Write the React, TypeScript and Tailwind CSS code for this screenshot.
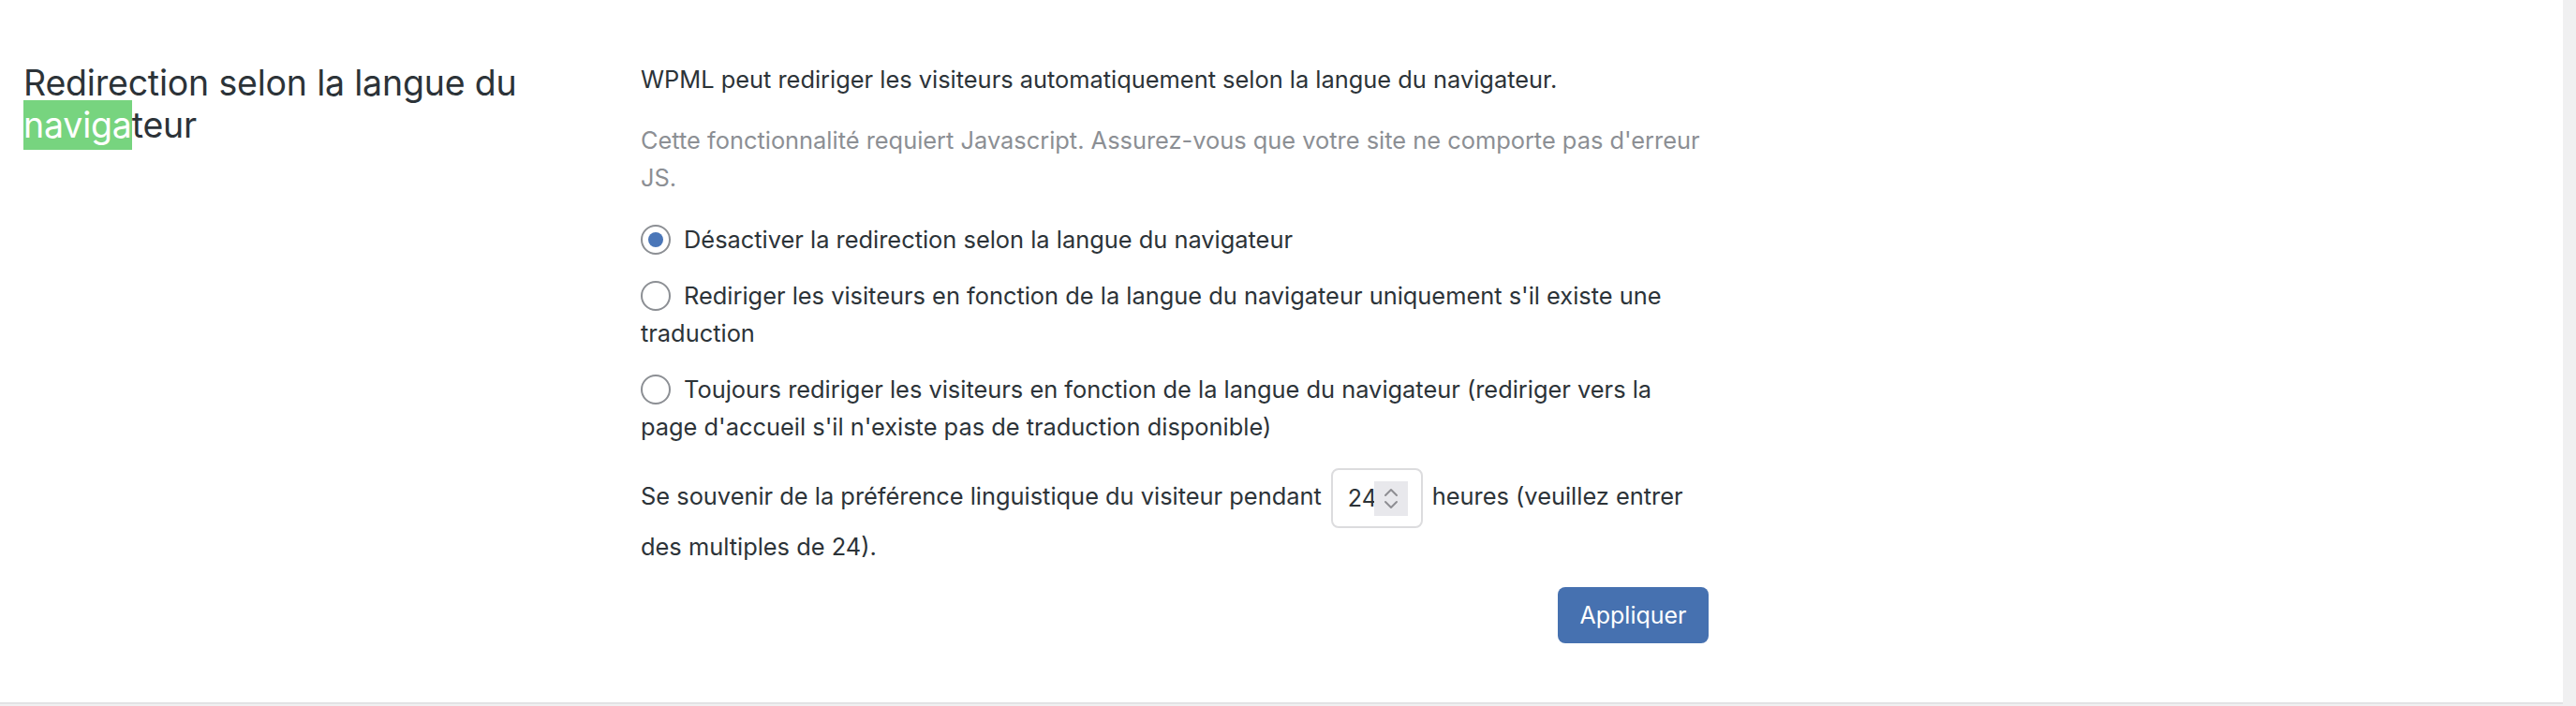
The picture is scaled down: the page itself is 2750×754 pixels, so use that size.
import React from "react";

function Radio({ checked }: { checked?: boolean }) {
  return (
    <span className="relative inline-flex w-[32px] h-[32px] rounded-full border-2 border-[#8c8f94] bg-white items-center justify-center align-middle mr-[14px] -mt-[4px]">
      {checked && <span className="w-[16px] h-[16px] rounded-full bg-[#4a76b8]" />}
    </span>
  );
}

function NumberBox() {
  return (
    <span className="inline-flex items-center align-middle w-[98px] h-[64px] mx-[10px] -my-[12px] rounded-[8px] border-2 border-[#dcdcde] bg-white pl-[16px]">
      <span className="text-[#2c3338] text-[25px]">24</span>
      <span className="-ml-[3px] w-[36px] h-[37px] bg-[#e8e8ec] flex flex-col items-center justify-center gap-[3px]">
        <svg width="16" height="10" viewBox="0 0 16 10" fill="none" stroke="#8e8e93" strokeWidth="2" strokeLinecap="round" strokeLinejoin="round">
          <path d="M2 8 L8 2 L14 8" />
        </svg>
        <svg width="16" height="10" viewBox="0 0 16 10" fill="none" stroke="#8e8e93" strokeWidth="2" strokeLinecap="round" strokeLinejoin="round">
          <path d="M2 2 L8 8 L14 2" />
        </svg>
      </span>
    </span>
  );
}

export default function App() {
  return (
    <div className="w-[2750px] h-[754px] bg-[#f0f0f1] flex font-['Inter',sans-serif]">
      <div className="w-[2736px] h-[752px] bg-white border-b-2 border-[#e2e2e4] flex">
        <div className="w-[684px] pl-[25px] pt-[66px]">
          <h2 className="text-[37.5px] leading-[45px] text-[#2c3338] font-normal tracking-[-0.2px]">
            Redirection selon la langue du
            <br />
            <span className="bg-[#77d47f] text-white py-[4px]">naviga</span>teur
          </h2>
        </div>

        <div className="w-[1140px] pt-[65px] text-[25.4px] leading-[40px] text-[#2c3338]">
          <p>WPML peut rediriger les visiteurs automatiquement selon la langue du navigateur.</p>

          <p className="mt-[25px] text-[#8c8f94]">
            Cette fonctionnalité requiert Javascript. Assurez-vous que votre site ne comporte pas d'erreur
            <br />
            JS.
          </p>

          <div className="mt-[26px] flex flex-col gap-[20px]">
            <label className="block whitespace-nowrap">
              <Radio checked />
              Désactiver la redirection selon la langue du navigateur
            </label>
            <label className="block whitespace-nowrap">
              <Radio />
              Rediriger les visiteurs en fonction de la langue du navigateur uniquement s'il existe une
              <br />
              traduction
            </label>
            <label className="block whitespace-nowrap">
              <Radio />
              Toujours rediriger les visiteurs en fonction de la langue du navigateur (rediriger vers la
              <br />
              page d'accueil s'il n'existe pas de traduction disponible)
            </label>
          </div>

          <p className="mt-[27px] leading-[54px] whitespace-nowrap">
            Se souvenir de la préférence linguistique du visiteur pendant
            <NumberBox />
            heures (veuillez entrer
            <br />
            des multiples de 24).
          </p>

          <div className="mt-[16px] flex justify-end">
            <button className="w-[161px] h-[60px] rounded-[8px] bg-[#4671b0] text-white text-[25px]">
              Appliquer
            </button>
          </div>
        </div>
      </div>
    </div>
  );
}
